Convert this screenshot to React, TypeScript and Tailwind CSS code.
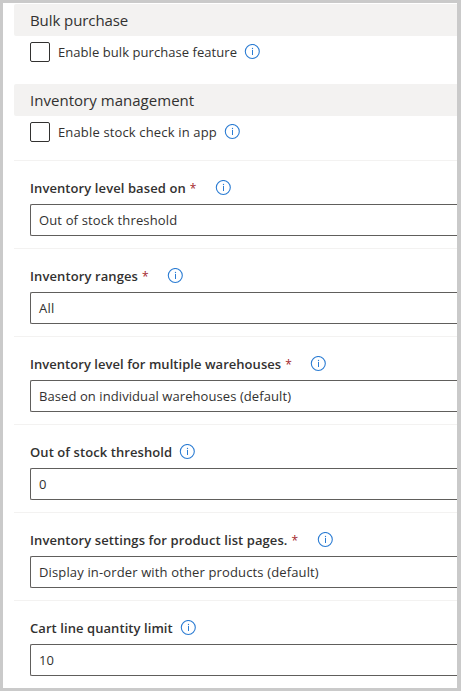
function InfoIcon() {
  return (
    <svg className="h-4 w-4 shrink-0" viewBox="0 0 16 16" fill="none">
      <circle cx="8.3" cy="7.5" r="7" stroke="#2b7cd3" strokeWidth="1.1" />
      <path d="M8.5 6V11" stroke="#2b7cd3" strokeWidth="1" />
      <circle cx="8.5" cy="4.5" r="0.65" fill="#2b7cd3" />
    </svg>
  );
}

function SectionHeader({ title, tracking }: { title: string; tracking: string }) {
  return (
    <h2 className="flex h-8 items-center rounded-l-[2px] bg-[#f3f2f1] pl-4 text-[15px] text-[#323130]">
      <span className={tracking}>{title}</span>
    </h2>
  );
}

function CheckRow({ label, width, tracking }: { label: string; width: string; tracking: string }) {
  return (
    <label className="flex h-8 items-center pl-4">
      <span className="h-5 w-5 shrink-0 rounded-[2px] border border-[#323130] bg-white" />
      <span className={`ml-2 shrink-0 pt-0.5 ${width} ${tracking}`}>{label}</span>
      <InfoIcon />
    </label>
  );
}

interface FieldProps {
  label: string;
  required?: boolean;
  value: string;
  width: string;
  tracking: string;
  valueTracking: string;
}

function Field({ label, required, value, width, tracking, valueTracking }: FieldProps) {
  return (
    <div className="h-[88px] border-t border-[#f3f2f1] pl-4">
      <div className="flex h-[43px] items-end">
        <div className="flex h-8 items-center">
          <span className={`shrink-0 pt-0.5 font-semibold whitespace-nowrap ${width} ${tracking}`}>
            {label}
            {required && <span className="ml-1 text-[12px] leading-none font-normal text-[#a4262c]">*</span>}
          </span>
          <InfoIcon />
        </div>
      </div>
      <div className="flex h-8 items-center rounded-l-[2px] border border-r-0 border-[#605e5c] pl-2">
        <span className={`pt-0.5 ${valueTracking}`}>{value}</span>
      </div>
    </div>
  );
}

export default function App() {
  return (
    <main className="h-[691px] w-[461px] overflow-hidden border-3 border-r-4 border-[#cacaca] bg-white pt-px pl-[11px] font-['Open_Sans','Noto_Sans',sans-serif] text-[13px] whitespace-nowrap text-[#323130]">
      <SectionHeader title="Bulk purchase" tracking="tracking-[-0.08px]" />
      <CheckRow label="Enable bulk purchase feature" width="w-[186px]" tracking="tracking-[0.06px]" />
      <div className="h-4" />
      <SectionHeader title="Inventory management" tracking="tracking-[0.03px]" />
      <CheckRow label="Enable stock check in app" width="w-[166px]" tracking="tracking-[0.15px]" />
      <div className="h-3" />
      <Field label="Inventory level based on" required value="Out of stock threshold" width="w-[185px]" tracking="tracking-[0.09px]" valueTracking="tracking-[0.14px]" />
      <Field label="Inventory ranges" required value="All" width="w-[137px]" tracking="tracking-[0.1px]" valueTracking="tracking-[0.3px]" />
      <Field label="Inventory level for multiple warehouses" required value="Based on individual warehouses (default)" width="w-[280px]" tracking="tracking-[0.04px]" valueTracking="tracking-[0.08px]" />
      <Field label="Out of stock threshold" value="0" width="w-[149px]" tracking="tracking-[0.08px]" valueTracking="tracking-normal" />
      <Field label="Inventory settings for product list pages." required value="Display in-order with other products (default)" width="w-[287px]" tracking="tracking-[0.09px]" valueTracking="tracking-[0.14px]" />
      <Field label="Cart line quantity limit" value="10" width="w-[150px]" tracking="tracking-[0.07px]" valueTracking="tracking-normal" />
    </main>
  );
}
